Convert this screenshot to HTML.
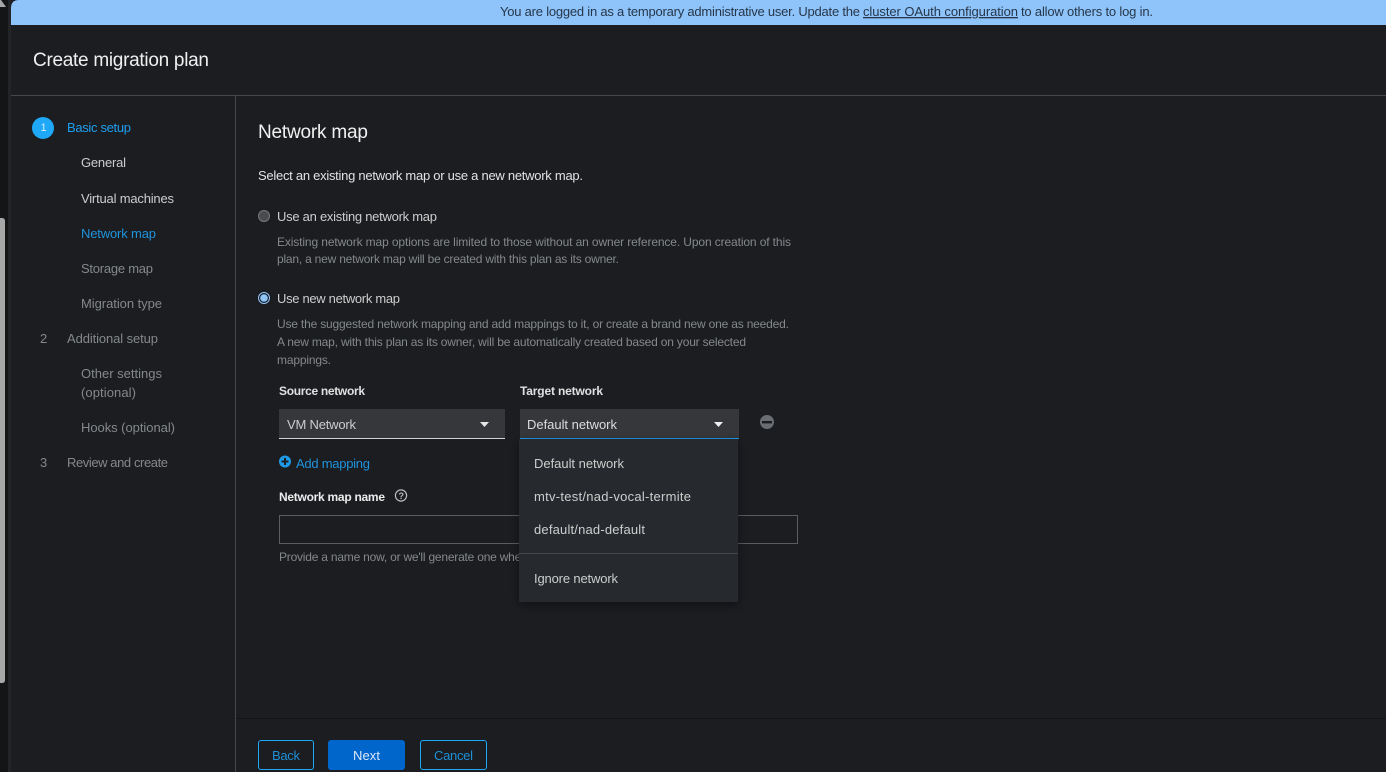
<!DOCTYPE html>
<html lang="en">
<head>
<meta charset="utf-8">
<title>Create migration plan</title>
<style>
html,body{margin:0;padding:0;background:#1b1d21;width:1386px;height:772px;overflow:hidden}
svg{display:block}
text{font-family:"Liberation Sans",sans-serif;font-size:13px;fill:#cdcdcd;white-space:pre}
.t{fill:#f0f0f0;font-size:19px}
.m{fill:#85888b}
.b{fill:#1f9ff0}
.d{font-size:12px;fill:#85888b}
.h{font-weight:bold;font-size:12px;fill:#e0e0e0}
.k{fill:#26364a;font-size:13px}
</style>
</head>
<body>
<svg width="1386" height="772" viewBox="0 0 1386 772" xmlns="http://www.w3.org/2000/svg">
<defs>
<filter id="s" x="-10%" y="-10%" width="120%" height="120%"><feDropShadow dx="0" dy="3" stdDeviation="5" flood-color="#000" flood-opacity=".45"/></filter>
</defs>
<rect width="1386" height="772" fill="#1b1d21"/>
<rect x="0" y="0" width="8" height="772" fill="#141516"/>
<rect x="8" y="0" width="3" height="772" fill="#222427"/>
<path d="M0 0H1V0L6 7H0Z" fill="#a8a8a8"/>
<path d="M0 218H2Q5 218 5 221V680Q5 683 2 683H0Z" fill="#a8a8a8"/>
<path d="M11 25V8Q11 0 19 0H1386V25Z" fill="#8fc4fa"/>

<text class="k" x="500" y="16" textLength="360">You are logged in as a temporary administrative user. Update the</text>
<text class="k" x="863" y="16" textLength="155" text-decoration="underline">cluster OAuth configuration</text>
<text class="k" x="1021" y="16" textLength="132">to allow others to log in.</text>

<text class="t" x="33" y="66" textLength="176">Create migration plan</text>
<rect x="11" y="95" width="1375" height="1" fill="#46474b"/>
<rect x="235" y="96" width="1" height="676" fill="#46474b"/>

<circle cx="43" cy="128" r="11" fill="#1fa7f8"/>
<text x="40.500" y="131" style="font-size:11px;fill:#d5ecfd">1</text>
<text class="b" x="67" y="132" textLength="64">Basic setup</text>
<text x="81" y="167" textLength="45">General</text>
<text x="81" y="203" textLength="93">Virtual machines</text>
<text x="81" y="238" textLength="75" style="fill:#1f93dc">Network map</text>
<text class="m" x="81" y="273" textLength="72">Storage map</text>
<text class="m" x="81" y="308" textLength="81">Migration type</text>
<text class="m" x="40" y="343">2</text>
<text class="m" x="67" y="343" textLength="91">Additional setup</text>
<text class="m" x="81" y="378" textLength="81">Other settings</text>
<text class="m" x="81" y="397" textLength="55">(optional)</text>
<text class="m" x="81" y="432" textLength="94">Hooks (optional)</text>
<text class="m" x="40" y="467">3</text>
<text class="m" x="67" y="467" textLength="101">Review and create</text>

<text class="t" x="258" y="138" textLength="110">Network map</text>
<text x="258" y="180" textLength="325" style="fill:#e2e2e2">Select an existing network map or use a new network map.</text>

<circle cx="264" cy="216" r="5.5" fill="#4a4b4e" stroke="#77797c" stroke-width="1"/>
<text x="277" y="221" textLength="160">Use an existing network map</text>
<text class="d" x="277" y="246" textLength="514">Existing network map options are limited to those without an owner reference. Upon creation of this</text>
<text class="d" x="277" y="263" textLength="342">plan, a new network map will be created with this plan as its owner.</text>

<circle cx="264" cy="298" r="5.5" fill="#1b1d21" stroke="#8fc4fa" stroke-width="1"/>
<circle cx="264" cy="298" r="3.8" fill="#8fc4fa"/>
<text x="277" y="303" textLength="123">Use new network map</text>
<text class="d" x="277" y="328" textLength="512">Use the suggested network mapping and add mappings to it, or create a brand new one as needed.</text>
<text class="d" x="277" y="346" textLength="469">A new map, with this plan as its owner, will be automatically created based on your selected</text>
<text class="d" x="277" y="364" textLength="54">mappings.</text>

<text class="h" x="279" y="395" textLength="86">Source network</text>
<text class="h" x="520" y="395" textLength="83">Target network</text>

<rect x="279" y="409" width="226" height="30" fill="#36373b"/>
<rect x="279" y="438" width="226" height="1" fill="#d2d2d2"/>
<text x="287" y="429" textLength="69">VM Network</text>
<path d="M480 422H489L484.500 427Z" fill="#e6e6e6"/>

<rect x="520" y="409" width="219" height="30" fill="#36373b"/>
<rect x="520" y="438" width="219" height="1" fill="#1f9ae6"/>
<text x="527" y="429" textLength="90" style="fill:#dcdcdc">Default network</text>
<path d="M714 422H723L718.500 427Z" fill="#f0f0f0"/>

<circle cx="767" cy="422" r="7" fill="#6a6e73"/>
<rect x="762" y="421" width="10" height="2.400" fill="#1b1d21"/>

<circle cx="285" cy="461.500" r="6" fill="#1f9ae6"/>
<rect x="281.500" y="460.500" width="7" height="2" fill="#1b1d21"/>
<rect x="284" y="458" width="2" height="7" fill="#1b1d21"/>
<text x="296" y="468" textLength="74" style="fill:#1f93dc">Add mapping</text>

<text class="h" x="279" y="501" textLength="106" style="fill:#ececec">Network map name</text>
<circle cx="401" cy="495.500" r="5.600" fill="none" stroke="#b8bbbe" stroke-width="1.200"/>
<text x="398.500" y="499" style="font-size:9px;font-weight:bold;fill:#b8bbbe">?</text>

<rect x="279.500" y="515.500" width="518" height="28" fill="none" stroke="#5a5c60"/>
<text class="d" x="279" y="561" textLength="349">Provide a name now, or we'll generate one when the plan is created.</text>

<rect x="519" y="439" width="219" height="163" fill="#26292d" filter="url(#s)"/>
<text x="534" y="468" textLength="90">Default network</text>
<text x="534" y="501" textLength="157">mtv-test/nad-vocal-termite</text>
<text x="534" y="534" textLength="111">default/nad-default</text>
<rect x="519" y="553" width="219" height="1" fill="#46474b"/>
<text x="534" y="583" textLength="84">Ignore network</text>

<rect x="236" y="718" width="1150" height="1" fill="#141517"/>
<rect x="258.500" y="740.500" width="55" height="29" rx="2.500" fill="none" stroke="#1fa7f8"/>
<text x="272" y="760" textLength="28" style="fill:#1f8fd6">Back</text>
<rect x="328" y="740" width="77" height="30" rx="3" fill="#0066cc"/>
<text x="353" y="760" textLength="27" style="fill:#dce9f7">Next</text>
<rect x="420.500" y="740.500" width="66" height="29" rx="2.500" fill="none" stroke="#1fa7f8"/>
<text x="434" y="760" textLength="39" style="fill:#1f8fd6">Cancel</text>
</svg>
</body>
</html>
